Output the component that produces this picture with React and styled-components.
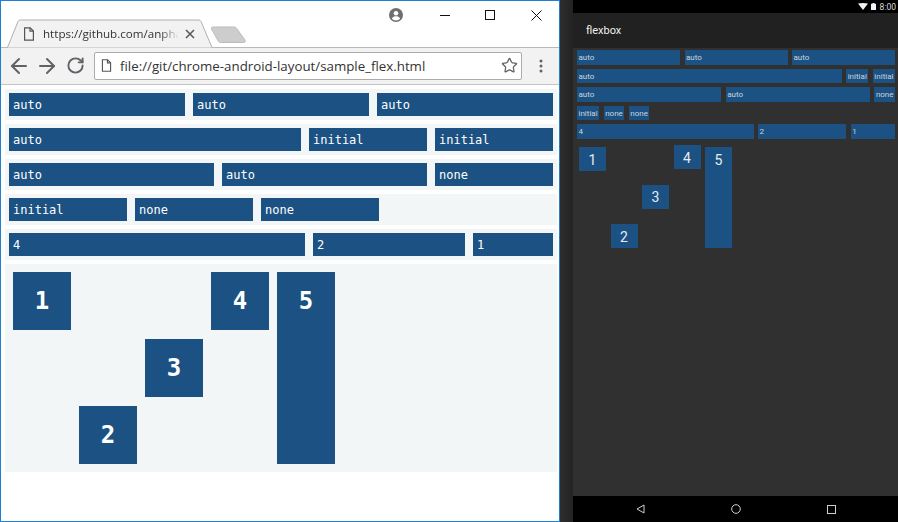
import React from 'react';
import styled, { createGlobalStyle } from 'styled-components';
import { ArrowLeft, ArrowRight, RotateCw, Star } from 'lucide-react';

const GlobalStyle = createGlobalStyle`
  html, body {
    margin: 0;
    padding: 0;
    overflow: hidden;
    background: #2a2a2a;
  }
  * {
    box-sizing: border-box;
  }
`;

const BLUE = '#1c5283';

const Screen = styled.div`
  display: flex;
  width: 898px;
  height: 522px;
`;

/* desktop chrome window */

const Browser = styled.div`
  display: flex;
  flex-direction: column;
  width: 560px;
  height: 522px;
  background: #fff;
  border: 1px solid #1f80d2;
`;

const TitleBar = styled.div`
  display: flex;
  height: 47px;
  padding: 18px 0 0 6px;
  border-bottom: 1px solid #b9b9b9;
`;

const Tab = styled.div`
  position: relative;
  display: flex;
  align-items: center;
  flex: none;
  width: 206px;
  height: 29px;
  margin-bottom: -1px;
  padding: 0 0 0 15px;
  font: 11.6px 'Open Sans', sans-serif;
  color: #333;
`;

const TabShape = styled.svg`
  position: absolute;
  left: 0;
  top: 0;
`;

const TabTitle = styled.span`
  position: relative;
  width: 136px;
  margin-left: 7px;
  overflow: hidden;
  white-space: nowrap;
  -webkit-mask-image: linear-gradient(to right, #000 86%, transparent 100%);
`;

const TabClose = styled.svg`
  position: relative;
  margin-left: 6px;
`;

const NewTab = styled.svg`
  flex: none;
  margin: 7px 0 0 -3px;
`;

const TitleRight = styled.div`
  display: flex;
  align-items: center;
  height: 28px;
  margin: -18px 0 0 auto;
`;

const Profile = styled.svg`
  margin-right: 37px;
`;

const WinButton = styled.svg`
  display: block;
  margin-right: ${p => p.$gap}px;
`;

const Toolbar = styled.div`
  display: flex;
  align-items: center;
  gap: 4px;
  height: 37px;
  padding: 0 0 1px 6px;
  background: #f2f2f2;
  border-bottom: 1px solid #c4c4c4;
  color: #5f6368;
`;

const NavIcon = styled.span`
  display: flex;
  align-items: center;
  justify-content: center;
  width: 24px;
`;

const AddressBar = styled.div`
  display: flex;
  align-items: center;
  width: 428px;
  height: 28px;
  margin-left: 3px;
  padding: 0 3px 0 5px;
  background: #fff;
  border: 1px solid #ababab;
  border-radius: 2px;
`;

const AddressText = styled.span`
  flex: 1;
  margin-left: 7px;
  font: 13.3px 'Open Sans', sans-serif;
  color: #333;
  white-space: nowrap;
`;

const Dots = styled.svg`
  margin-left: 13px;
`;

const Page = styled.div`
  flex: 1;
  padding: 4px 2px 4px 4px;
`;

const Row = styled.div`
  display: flex;
  margin-bottom: 4px;
  padding: 4px 0;
  background: #f3f6f7;
`;

const Item = styled.div`
  flex: ${p => p.$flex};
  width: 118px;
  height: 23px;
  margin: 0 4px;
  padding: 0 4px;
  background: ${BLUE};
  font: 12px/24px 'DejaVu Sans Mono', monospace;
  color: #fff;
`;

const AlignRow = styled.div`
  display: flex;
  height: 208px;
  padding: 8px 4px;
  background: #f3f6f7;
`;

const Big = styled.div`
  display: flex;
  align-items: ${p => (p.$self === 'stretch' ? 'flex-start' : 'center')};
  justify-content: center;
  align-self: ${p => p.$self};
  flex: none;
  width: 58px;
  min-height: 58px;
  margin: 0 4px;
  padding-top: ${p => (p.$self === 'stretch' ? '14px' : '0')};
  background: ${BLUE};
  font: bold 24px/30px 'DejaVu Sans Mono', monospace;
  color: #fff;
`;

/* android emulator */

const Bezel = styled.div`
  flex: none;
  width: 13px;
  background: linear-gradient(to right, #2e2e2e, #232323);
`;

const Phone = styled.div`
  display: flex;
  flex-direction: column;
  width: 325px;
  height: 522px;
  background: #303030;
`;

const StatusBar = styled.div`
  display: flex;
  align-items: center;
  justify-content: flex-end;
  height: 13px;
  padding-right: 2px;
  background: #000;
  font: 8.5px Roboto, sans-serif;
  color: #d8d8d8;
`;

const StatusIcon = styled.svg`
  margin-right: ${p => p.$gap}px;
`;

const ActionBar = styled.div`
  display: flex;
  align-items: center;
  flex: none;
  height: 35px;
  padding-left: 13px;
  background: #212121;
  font: 11px Roboto, sans-serif;
  color: #efefef;
`;

const PhoneContent = styled.div`
  flex: 1;
  padding: 2px 3px 0 4px;
`;

const PhoneRow = styled.div`
  display: flex;
  gap: 4.5px;
  height: 14.5px;
  margin-bottom: 4px;
`;

const PhoneItem = styled.div`
  flex: ${p => p.$flex};
  padding: 0 1.5px;
  background: ${BLUE};
  font: 8px/15px Roboto, sans-serif;
  color: #c8d4df;
  white-space: nowrap;
`;

const PhoneAlign = styled.div`
  display: flex;
  gap: 4.5px;
  height: 103px;
  margin-top: 6.5px;
  padding: 0 0 0 2px;
`;

const PhoneBig = styled.div`
  display: flex;
  align-items: ${p => (p.$self === 'stretch' ? 'flex-start' : 'center')};
  justify-content: center;
  align-self: ${p => p.$self};
  flex: none;
  width: 27px;
  height: ${p => (p.$self === 'stretch' ? 'auto' : '24px')};
  margin-top: ${p => p.$lift || 0}px;
  padding-top: ${p => (p.$self === 'stretch' ? '6px' : '1px')};
  background: ${BLUE};
  font: 14px/14px Roboto, sans-serif;
  color: #e6ebf0;
`;

const NavBar = styled.div`
  display: flex;
  align-items: center;
  flex: none;
  height: 26px;
  padding-left: 63px;
  background: #000;
`;

const NavGlyph = styled.svg`
  margin-right: ${p => p.$gap}px;
`;

const FileIcon = ({ size = 14 }) => (
  <svg width={size} height={size} viewBox="0 0 14 14" fill="none" stroke="#555" strokeWidth="1.2" style={{ flex: 'none', position: 'relative' }}>
    <path d="M2.600 0.800h5.600l3.200 3.200v9.200h-8.800z" />
    <path d="M8 0.800v3.400h3.400" />
  </svg>
);

const rows = [
  ['auto', 'auto', 'auto'],
  ['auto', 'initial', 'initial'],
  ['auto', 'auto', 'none'],
  ['initial', 'none', 'none'],
];

const cssFlex = name => (name === 'auto' ? '1 1 auto' : name === 'none' ? '0 0 auto' : '0 1 auto');

const App = () => (
  <Screen>
    <GlobalStyle />
    <Browser>
      <TitleBar>
        <Tab>
          <TabShape width="206" height="29" viewBox="0 0 206 29" fill="none">
            <path d="M0 28.500h0.500l10.500-26q0.600-1.500 2.200-1.500h178.600q1.600 0 2.200 1.500l11 26h0.500" fill="#f2f2f2" stroke="#b0b0b0" />
          </TabShape>
          <FileIcon />
          <TabTitle>https://github.com/anpha</TabTitle>
          <TabClose width="10" height="10" viewBox="0 0 10 10" stroke="#5a5a5a" strokeWidth="1.6">
            <path d="M1 1l8 8M9 1l-8 8" />
          </TabClose>
        </Tab>
        <NewTab width="36" height="19" viewBox="0 0 36 19">
          <path d="M2.500 1h22q1 0 1.800 1l8.700 12q1 2-1 2.500h-23.500q-1.500 0-2-1l-7-12.500q-.5-2 1-2z" fill="#cdcdcd" stroke="#bcbcbc" />
        </NewTab>
        <TitleRight>
          <Profile width="14" height="14" viewBox="0 0 14 14">
            <circle cx="7" cy="7" r="7" fill="#6f6f6f" />
            <circle cx="7" cy="5.200" r="2.300" fill="#fff" />
            <path d="M2.800 10.600c1-1.900 2.600-2.400 4.200-2.400s3.200.5 4.200 2.400c-1 1.200-2.500 1.900-4.200 1.900s-3.200-.7-4.200-1.900z" fill="#fff" />
          </Profile>
          <WinButton $gap={35} width="10" height="10" viewBox="0 0 10 10" stroke="#111" fill="none">
            <path d="M0 5.500h10" />
          </WinButton>
          <WinButton $gap={36} width="10" height="10" viewBox="0 0 10 10" stroke="#111" fill="none">
            <rect x="0.500" y="0.500" width="9" height="9" />
          </WinButton>
          <WinButton $gap={17} width="11" height="11" viewBox="0 0 11 11" stroke="#111" fill="none">
            <path d="M0.500 0.500l10 10M10.500 0.500l-10 10" />
          </WinButton>
        </TitleRight>
      </TitleBar>
      <Toolbar>
        <NavIcon><ArrowLeft size={24} strokeWidth={2} /></NavIcon>
        <NavIcon><ArrowRight size={24} strokeWidth={2} /></NavIcon>
        <NavIcon><RotateCw size={19} strokeWidth={2.4} /></NavIcon>
        <AddressBar>
          <FileIcon size={13} />
          <AddressText>file://git/chrome-android-layout/sample_flex.html</AddressText>
          <Star size={17} strokeWidth={1.8} color="#5f6368" />
        </AddressBar>
        <Dots width="4" height="14" viewBox="0 0 4 14" fill="#5f6368">
          <circle cx="2" cy="2" r="1.500" />
          <circle cx="2" cy="7" r="1.500" />
          <circle cx="2" cy="12" r="1.500" />
        </Dots>
      </Toolbar>
      <Page>
        {rows.map((row, i) => (
          <Row key={i}>
            {row.map((name, j) => (
              <Item key={j} $flex={cssFlex(name)}>{name}</Item>
            ))}
          </Row>
        ))}
        <Row>
          <Item $flex="4 1 0">4</Item>
          <Item $flex="2 1 0">2</Item>
          <Item $flex="1 1 0">1</Item>
        </Row>
        <AlignRow>
          <Big $self="flex-start">1</Big>
          <Big $self="flex-end">2</Big>
          <Big $self="center">3</Big>
          <Big $self="flex-start">4</Big>
          <Big $self="stretch">5</Big>
        </AlignRow>
      </Page>
    </Browser>
    <Bezel />
    <Phone>
      <StatusBar>
        <StatusIcon $gap={3} width="10" height="7" viewBox="0 0 10 7" fill="#f2f2f2"><path d="M0 0.500q5-1 10 0l-5 6.500z" /></StatusIcon>
        <StatusIcon $gap={4} width="5" height="7" viewBox="0 0 5 7" fill="#f2f2f2"><path d="M1.500 0h2v.7h1.500v6.300h-5v-6.300h1.500z" /></StatusIcon>
        <span>8:00</span>
      </StatusBar>
      <ActionBar>flexbox</ActionBar>
      <PhoneContent>
        {rows.map((row, i) => (
          <PhoneRow key={i}>
            {row.map((name, j) => (
              <PhoneItem key={j} $flex={cssFlex(name)}>{name}</PhoneItem>
            ))}
          </PhoneRow>
        ))}
        <PhoneRow>
          <PhoneItem $flex="173 1 0">4</PhoneItem>
          <PhoneItem $flex="85 1 0">2</PhoneItem>
          <PhoneItem $flex="41 1 0">1</PhoneItem>
        </PhoneRow>
        <PhoneAlign>
          <PhoneBig $self="flex-start" $lift={2}>1</PhoneBig>
          <PhoneBig $self="flex-end">2</PhoneBig>
          <PhoneBig $self="center">3</PhoneBig>
          <PhoneBig $self="flex-start">4</PhoneBig>
          <PhoneBig $self="stretch" $lift={2}>5</PhoneBig>
        </PhoneAlign>
      </PhoneContent>
      <NavBar>
        <NavGlyph $gap={86} width="9" height="10" viewBox="0 0 9 10" fill="none" stroke="#d0d0d0">
          <path d="M8 1v8l-7-4z" />
        </NavGlyph>
        <NavGlyph $gap={86} width="10" height="10" viewBox="0 0 10 10" fill="none" stroke="#d0d0d0">
          <circle cx="5" cy="5" r="4.300" />
        </NavGlyph>
        <NavGlyph $gap={0} width="9" height="9" viewBox="0 0 9 9" fill="none" stroke="#d0d0d0">
          <rect x="0.500" y="0.500" width="8" height="8" />
        </NavGlyph>
      </NavBar>
    </Phone>
  </Screen>
);

export default App;
